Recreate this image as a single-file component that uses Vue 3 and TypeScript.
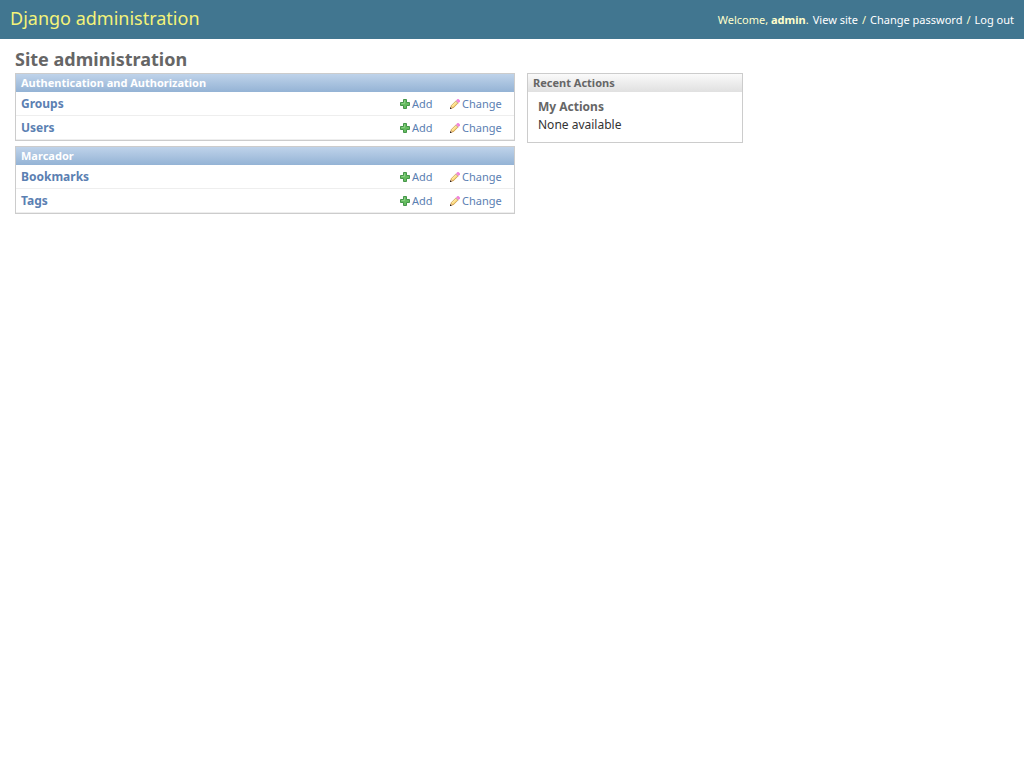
<script setup lang="ts">
interface AppGroup {
  name: string
  models: string[]
}

const groups: AppGroup[] = [
  { name: 'Authentication and Authorization', models: ['Groups', 'Users'] },
  { name: 'Marcador', models: ['Bookmarks', 'Tags'] },
]
</script>

<template>
  <div class="page">
    <header class="header">
      <div class="brand">Django administration</div>
      <div class="user-tools">
        <span>Welcome, <strong>admin</strong>.</span>
        <a href="#site">View site</a>
        <span>/</span>
        <a href="#password">Change password</a>
        <span>/</span>
        <a href="#logout">Log out</a>
      </div>
    </header>
    <main class="content">
      <h1>Site administration</h1>
      <div class="columns">
        <div class="apps">
          <table v-for="group in groups" :key="group.name" class="module">
            <thead>
              <tr>
                <th colspan="3" scope="colgroup" class="caption">{{ group.name }}</th>
              </tr>
            </thead>
            <tbody>
              <tr v-for="model in group.models" :key="model">
                <th scope="row"><a :href="'#' + model">{{ model }}</a></th>
                <td class="add">
                  <a :href="'#add-' + model">
                    <svg width="10" height="10" viewBox="0 0 10 10" aria-hidden="true">
                      <path d="M3.5.5h3v3h3v3h-3v3h-3v-3h-3v-3h3z" fill="#66bd60" stroke="#46964a" />
                      <path d="M4.5 1.5V4.5H1.5" fill="none" stroke="#8ccf86" />
                    </svg>Add</a>
                </td>
                <td class="change">
                  <a :href="'#change-' + model">
                    <svg width="10" height="10" viewBox="0 0 10 10" aria-hidden="true">
                      <path d="M0 10l1-3.5L6 1.5 8.5 4 3.5 9z" fill="#cf9c4c" />
                      <path d="M1.4 7.1L6 2.5 7.5 4 2.9 8.6z" fill="#ffe287" />
                      <path d="M1.6 7.2L6.1 2.7" stroke="#fff3c4" stroke-width=".7" />
                      <path d="M0 10l.8-2.8 2 2z" fill="#e9c5a0" />
                      <path d="M0 10V8.1L1.9 10z" fill="#30251f" />
                      <path d="M6 1.5L7.5 0H8.5L10 1.5V2.5L8.5 4z" fill="#f184dc" />
                      <path d="M5.5 2L8 4.5" stroke="#c8b8c4" stroke-width=".8" />
                    </svg>Change</a>
                </td>
              </tr>
            </tbody>
          </table>
        </div>
        <aside class="recent">
          <h2>Recent Actions</h2>
          <div class="actions">
            <h3>My Actions</h3>
            <p>None available</p>
          </div>
        </aside>
      </div>
    </main>
  </div>
</template>

<style>
body {
  margin: 0;
  background: #fff;
}
</style>

<style scoped>
.page {
  font-family: "Lucida Grande", "Noto Sans", "DejaVu Sans", sans-serif;
  font-size: 12px;
  color: #333;
}

a {
  color: #5b80b2;
  text-decoration: none;
}

.header {
  display: flex;
  justify-content: space-between;
  align-items: center;
  min-height: 39px;
  padding: 0 10px;
  background: #417690;
  color: #ffc;
}

.brand {
  font-size: 18px;
  line-height: 36px;
  padding-bottom: 3px;
  color: #f4f379;
}

.user-tools {
  display: flex;
  gap: 4px;
  font-size: 11px;
  line-height: 16px;
  padding-top: 1px;
}

.user-tools a {
  color: #fff;
}

.content {
  padding: 10px 15px;
}

h1 {
  margin: 0;
  font-size: 18px;
  line-height: 20px;
  padding-bottom: 4px;
  color: #666;
}

.columns {
  display: grid;
  grid-template-columns: minmax(0, 500px) 216px;
  align-items: start;
  gap: 12px;
}

.apps {
  display: grid;
  gap: 5px;
}

.module {
  width: 100%;
  box-sizing: border-box;
  border: 1px solid #ccc;
  border-collapse: separate;
  border-spacing: 0;
}

.module th,
.module td {
  box-sizing: border-box;
  height: 24px;
  padding: 0 5px;
  border-bottom: 1px solid #eee;
  line-height: 16px;
  text-align: left;
  vertical-align: middle;
}

.module .caption {
  height: 18px;
  padding: 0 5px;
  border: 0;
  background: linear-gradient(#bfd3ea, #94b3d5);
  color: #fff;
  font-size: 11px;
}

.module td {
  font-size: 11px;
}

.module .add {
  width: 50px;
  padding-right: 0;
}

.module .change {
  width: 69px;
}

td a {
  display: flex;
  align-items: center;
  gap: 2px;
}

.recent {
  border: 1px solid #ccc;
}

h2 {
  margin: 0;
  padding: 0 5px;
  background: linear-gradient(#fafafa, #e0e0e0);
  color: #666;
  font-size: 11px;
  line-height: 18px;
}

.actions {
  padding: 6px 10px 8px;
}

h3,
p {
  margin: 0;
  font-size: 12px;
  line-height: 18px;
}

h3 {
  color: #666;
}
</style>
